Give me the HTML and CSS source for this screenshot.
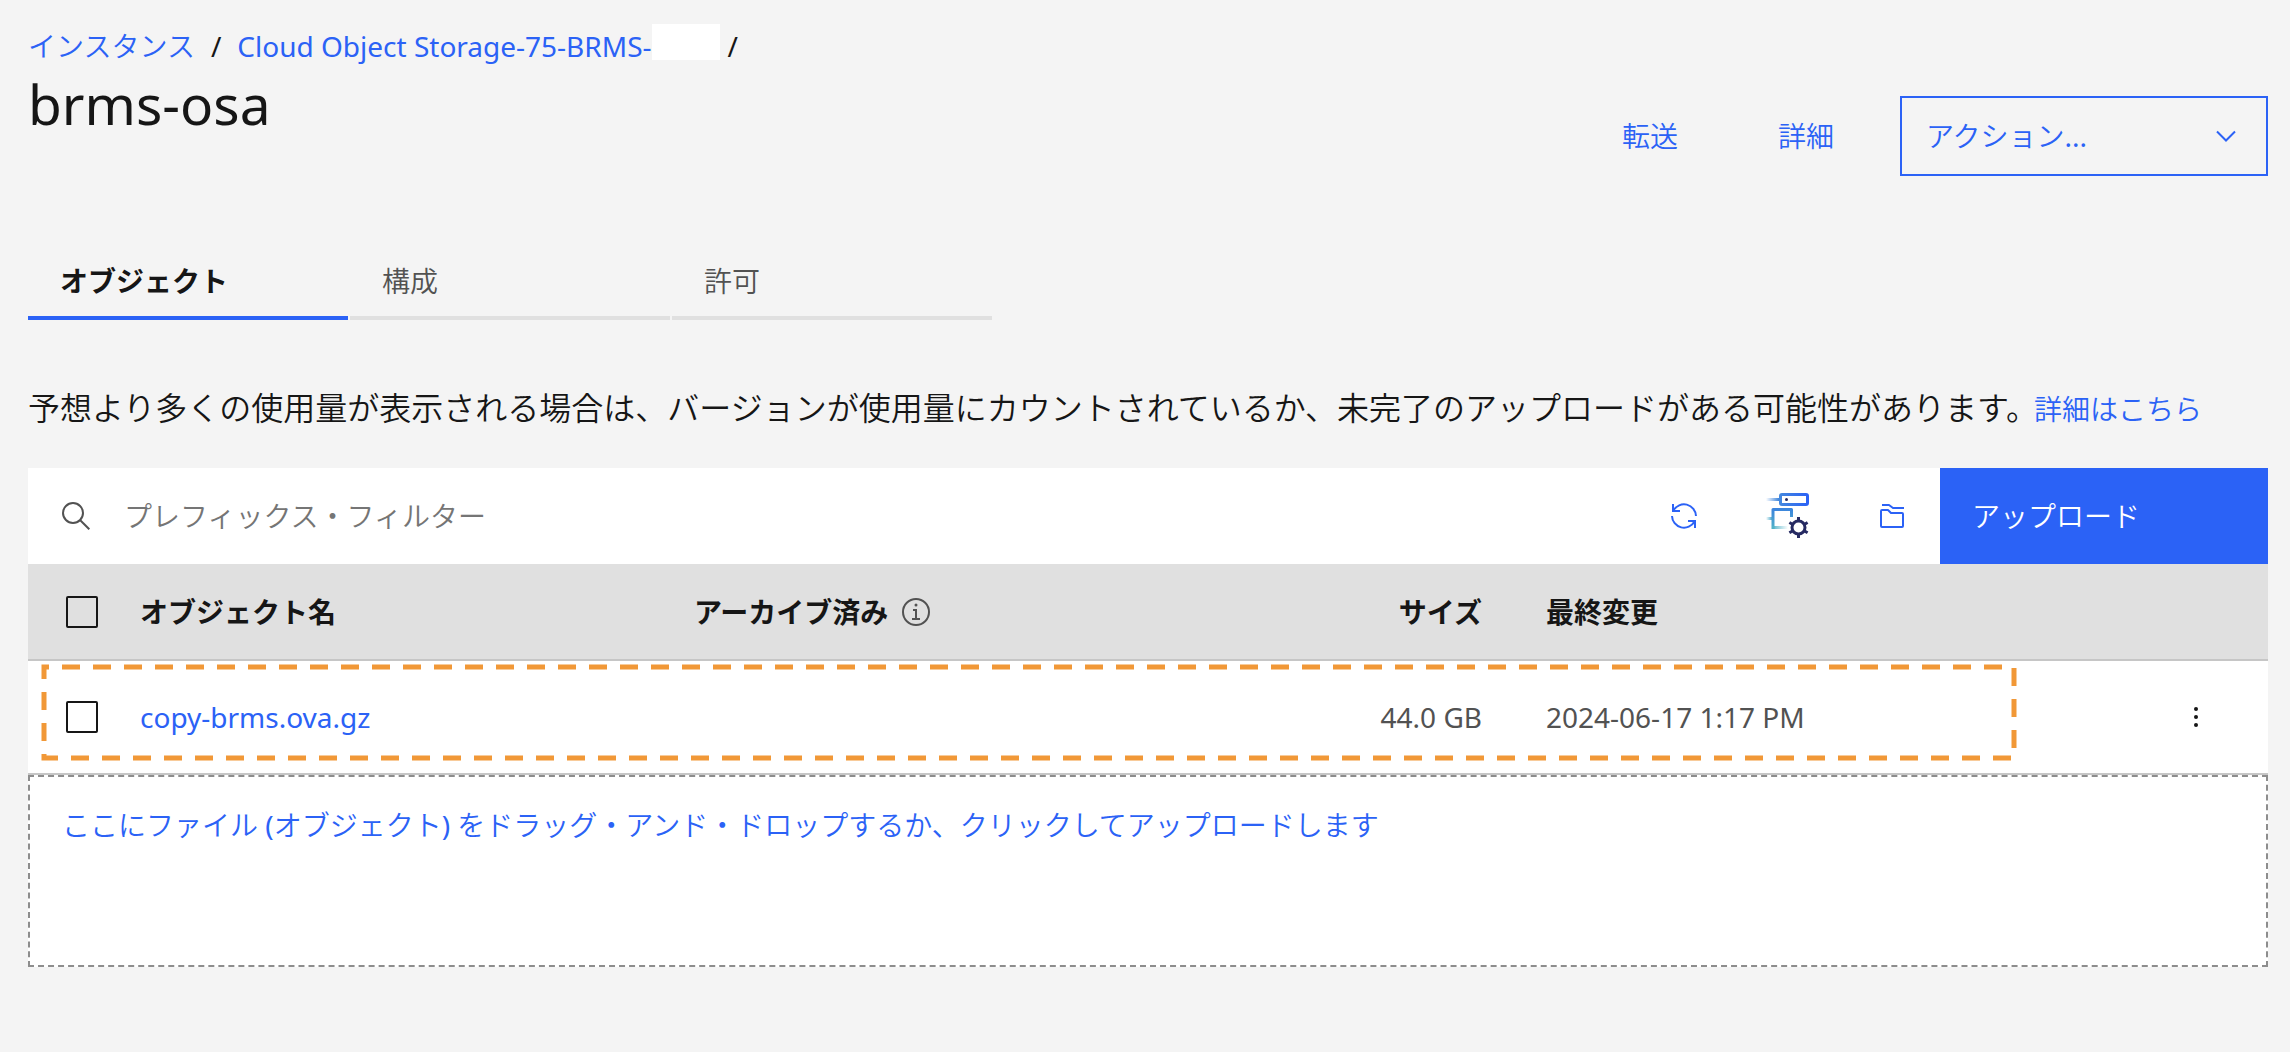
FILE: index.html
```html
<!DOCTYPE html>
<html lang="ja">
<head>
<meta charset="utf-8">
<meta name="viewport" content="width=device-width, initial-scale=1">
<title>brms-osa</title>
<link rel="stylesheet" href="styles.css">
</head>
<body>
<main class="page">
  <header class="page-header">
    <div class="heading">
      <nav class="breadcrumb" aria-label="breadcrumb">
        <a href="#" class="ja">インスタンス</a>
        <span>/</span>
        <span class="instance"><a href="#">Cloud Object Storage-75-BRMS-</a><span class="mask"></span></span>
        <span class="last">/</span>
      </nav>
      <h1>brms-osa</h1>
    </div>
    <div class="header-actions ja">
      <button type="button" class="ghost">転送</button>
      <button type="button" class="ghost">詳細</button>
      <button type="button" class="action-menu">アクション...
        <svg width="20" height="12" viewBox="0 0 20 12" aria-hidden="true"><path d="M1 1.500 10 10.500 19 1.500" fill="none" stroke="currentColor" stroke-width="2"/></svg>
      </button>
    </div>
  </header>

  <div class="tabs ja" role="tablist">
    <button type="button" role="tab" aria-selected="true" class="tab selected">オブジェクト</button>
    <button type="button" role="tab" aria-selected="false" class="tab">構成</button>
    <button type="button" role="tab" aria-selected="false" class="tab">許可</button>
  </div>

  <p class="notice ja">予想より多くの使用量が表示される場合は、バージョンが使用量にカウントされているか、未完了のアップロードがある可能性があります。<a href="#">詳細はこちら</a></p>

  <section class="objects">
    <div class="toolbar ja">
      <label class="search">
        <svg width="28" height="28" viewBox="0 0 28 28" aria-hidden="true"><g fill="none" stroke="#525252" stroke-width="2"><circle cx="11" cy="11" r="10"/><path d="m18 18 9.300 9.300"/></g></svg>
        <input type="text" placeholder="プレフィックス・フィルター" aria-label="プレフィックス・フィルター">
      </label>
      <button type="button" class="icon-button" aria-label="更新">
        <svg width="26" height="26" viewBox="0 0 26 26" fill="none" stroke="#2b62f6" stroke-width="2" aria-hidden="true"><path d="M25 13A12 12 0 0 0 2.500 7.500M2 1v7h7M1 13a12 12 0 0 0 22.500 5.500M24 25v-7h-7"/></svg>
      </button>
      <button type="button" class="icon-button" aria-label="構成">
        <svg width="44" height="46" viewBox="0 0 44 46" fill="none" aria-hidden="true">
          <defs>
            <linearGradient id="device" gradientUnits="userSpaceOnUse" x1="0" y1="0" x2="42" y2="0"><stop offset="0" stop-color="#4589dd" stop-opacity="0"/><stop offset=".3" stop-color="#4589dd"/><stop offset="1" stop-color="#2b62f6"/></linearGradient>
            <linearGradient id="box" gradientUnits="userSpaceOnUse" x1="0" y1="36" x2="0" y2="16"><stop offset="0" stop-color="#52b3c8"/><stop offset="1" stop-color="#3b84dd"/></linearGradient>
            <linearGradient id="foot" gradientUnits="userSpaceOnUse" x1="6" y1="0" x2="22" y2="0"><stop offset="0" stop-color="#52b3c8"/><stop offset="1" stop-color="#52b3c8" stop-opacity="0"/></linearGradient>
            <linearGradient id="stub" gradientUnits="userSpaceOnUse" x1="0" y1="0" x2="6" y2="0"><stop offset="0" stop-color="#52b3c8" stop-opacity="0"/><stop offset="1" stop-color="#4ba3cf"/></linearGradient>
          </defs>
          <path d="M0 5h14v3H0z" fill="url(#device)"/>
          <rect x="14.500" y="1.500" width="27" height="10" rx="1.500" stroke="url(#device)" stroke-width="3"/>
          <circle cx="20.500" cy="6.500" r="1.500" fill="#262a62"/>
          <path d="M25.500 24v-7.500h-18.500V36" stroke="url(#box)" stroke-width="3" stroke-linejoin="round"/>
          <path d="M0 24h6v3H0z" fill="url(#stub)"/>
          <path d="M6 33h16v3H6z" fill="url(#foot)"/>
          <g stroke="#262a62" stroke-width="3"><circle cx="32.500" cy="34.500" r="6.500"/><path d="M32.500 24v5M32.500 40v5M23.400 29.500l4.300 2.500M37.300 37.300l4.300 2.500M23.400 39.800l4.300-2.500M37.300 32l4.300-2.500"/></g>
        </svg>
      </button>
      <button type="button" class="icon-button" aria-label="フォルダー">
        <svg width="24" height="24" viewBox="0 0 24 24" fill="none" stroke="#2b62f6" stroke-width="2" stroke-linejoin="round" aria-hidden="true"><path d="M2 1h7l4 3h11M1 7q0-1 1-1h6l3 3h11q1 0 1 1v12q0 1-1 1H2q-1 0-1-1z"/></svg>
      </button>
      <button type="button" class="upload">アップロード</button>
    </div>

    <table>
      <colgroup><col class="c-check"><col class="c-name"><col class="c-archive"><col class="c-size"><col><col class="c-menu"></colgroup>
      <thead>
        <tr>
          <th class="check"><input type="checkbox" aria-label="すべて選択"></th>
          <th>オブジェクト名</th>
          <th><span class="with-icon">アーカイブ済み
            <svg width="28" height="28" viewBox="0 0 28 28" aria-hidden="true"><circle cx="14" cy="14" r="13" fill="none" stroke="#525252" stroke-width="2"/><circle cx="14" cy="7" r="1.500" fill="#525252"/><path d="M11 12h3v9M10 21h8" fill="none" stroke="#525252" stroke-width="2"/></svg>
          </span></th>
          <th class="num">サイズ</th>
          <th>最終変更</th>
          <th></th>
        </tr>
      </thead>
      <tbody>
        <tr>
          <td class="check"><input type="checkbox" aria-label="copy-brms.ova.gz を選択"><svg class="highlight" aria-hidden="true"><rect x="4" y="4"/></svg></td>
          <td><a href="#">copy-brms.ova.gz</a></td>
          <td></td>
          <td class="num">44.0 GB</td>
          <td>2024-06-17 1:17 PM</td>
          <td class="menu"><button type="button" aria-label="オプション"><svg width="4" height="20" viewBox="0 0 4 20" fill="#161616" aria-hidden="true"><circle cx="2" cy="2" r="2"/><circle cx="2" cy="10" r="2"/><circle cx="2" cy="18" r="2"/></svg></button></td>
        </tr>
      </tbody>
    </table>

    <button type="button" class="dropzone ja">ここにファイル (オブジェクト) をドラッグ・アンド・ドロップするか、クリックしてアップロードします</button>
  </section>
</main>
</body>
</html>
```

FILE: styles.css
```css
* { box-sizing: border-box; }

body {
  margin: 0;
  background: #f4f4f4;
  color: #161616;
  font-family: "Noto Sans", "Noto Sans CJK JP", sans-serif;
  font-size: 28px;
  line-height: 36px;
}

.ja { font-family: "Noto Sans", "Noto Sans CJK JP DemiLight", "Noto Sans CJK JP", sans-serif; }

a { color: #2b62f6; text-decoration: none; }

button {
  border: 0;
  padding: 0;
  background: none;
  color: #2b62f6;
  font: inherit;
  cursor: pointer;
}

svg { display: block; flex: none; }

.page { padding: 24px 22px 84px 28px; }

.page-header { display: flex; justify-content: space-between; }

.breadcrumb { display: flex; align-items: center; gap: 16px; height: 44px; }
.instance { display: flex; align-items: center; height: 44px; }
.breadcrumb .last { margin-left: -8px; }
.mask { align-self: flex-start; width: 68px; height: 36px; background: #fff; }

h1 { margin: 0; font-size: 55px; line-height: 72px; font-weight: 400; }

.header-actions { display: flex; align-items: center; height: 80px; margin-top: 72px; }
.ghost { width: 156px; height: 80px; }
.action-menu {
  display: flex;
  align-items: center;
  justify-content: space-between;
  width: 368px;
  height: 80px;
  margin-left: 16px;
  padding: 0 30px 0 24px;
  border: 2px solid #2b62f6;
}

.tabs { display: flex; gap: 2px; margin-top: 68px; }
.tab {
  width: 320px;
  height: 76px;
  padding: 2px 32px 0;
  border-bottom: 4px solid #e0e0e0;
  color: #525252;
  text-align: left;
}
.tab.selected {
  border-color: #2b62f6;
  color: #161616;
  font-family: "Noto Sans", "Noto Sans CJK JP", sans-serif;
  font-weight: 600;
}

.notice { margin: 64px 0 36px; font-size: 32px; line-height: 48px; }
.notice a { margin-left: -4px; font-size: 28px; line-height: 28px; }

.toolbar { display: flex; height: 96px; background: #fff; }
.search { display: flex; flex: 1; align-items: center; gap: 34px; padding-left: 34px; }
.search input {
  flex: 1;
  min-width: 0;
  border: 0;
  padding: 0;
  outline: 0;
  background: none;
  font: inherit;
}
.search input::placeholder { color: #757575; opacity: 1; }
.icon-button {
  display: flex;
  align-items: center;
  justify-content: center;
  width: 104px;
  padding-left: 8px;
}
.upload { width: 328px; padding: 0 32px; background: #2b62f6; color: #fff; text-align: left; }

table { width: 100%; table-layout: fixed; border-collapse: separate; border-spacing: 0; }
.c-check { width: 80px; }
.c-name { width: 554px; }
.c-archive { width: 550px; }
.c-size { width: 302px; }
.c-menu { width: 144px; }
th, td { padding: 0 32px; border-bottom: 2px solid #c6c6c6; text-align: left; }
th { height: 97px; background: #e0e0e0; font-weight: 600; }
td { height: 114px; background: #fff; color: #525252; }
.num { text-align: right; }
.check { padding: 0 0 0 38px; }
.with-icon { display: flex; align-items: center; gap: 14px; }
tbody tr { position: relative; }

input[type="checkbox"] {
  display: block;
  appearance: none;
  width: 32px;
  height: 32px;
  margin: 0;
  border: 2px solid #161616;
  border-radius: 2px;
}

.highlight {
  position: absolute;
  top: 2px;
  left: 12px;
  width: calc(100% - 262px);
  height: 99px;
  pointer-events: none;
}
.highlight rect {
  width: calc(100% - 8px);
  height: 91px;
  fill: none;
  stroke: #f19837;
  stroke-width: 5px;
  stroke-dasharray: 18 13;
  stroke-dashoffset: 13px;
}

.menu { padding: 0; }
.menu button { display: flex; align-items: center; justify-content: center; width: 144px; height: 64px; }

.dropzone {
  display: block;
  width: 100%;
  height: 192px;
  padding: 30px 32px 122px;
  border: 2px dashed #8d8d8d;
  background: #fff;
  text-align: left;
}
```
